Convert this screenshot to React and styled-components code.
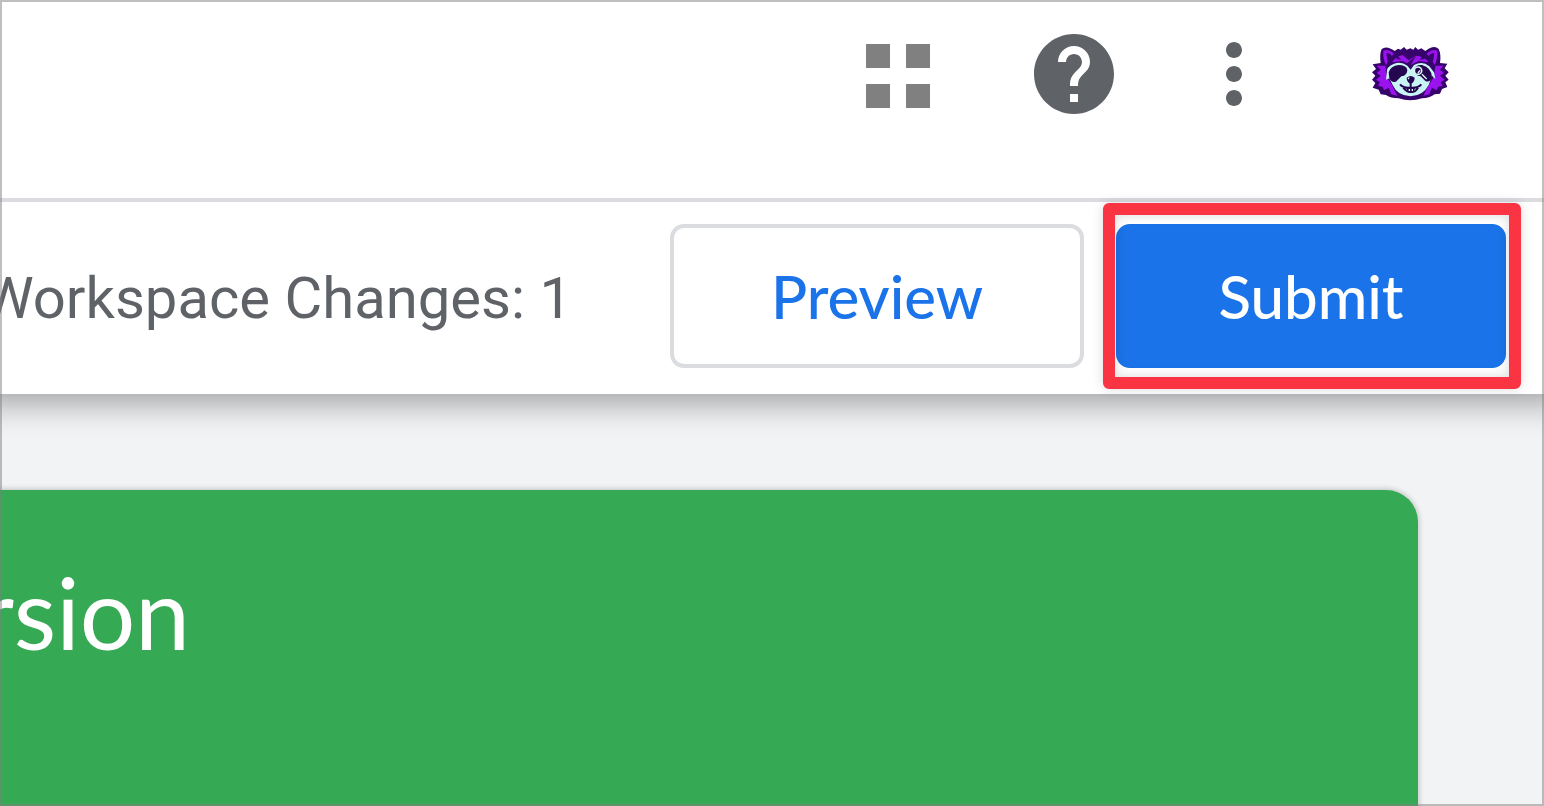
import React from "react";
import styled, { createGlobalStyle } from "styled-components";
import { MdHelp, MdMoreVert } from "react-icons/md";

const GlobalStyle = createGlobalStyle`
  * {
    box-sizing: border-box;
  }

  body {
    margin: 0;
    background-color: #F1F3F4;
    font-family: Lato, "Liberation Sans", sans-serif;
  }
`

const Page = styled.div`
  position: relative;
  display: flex;
  flex-direction: column;
  min-height: 100vh;
  overflow: hidden;
`

/* thin grey edge lying over the whole page */
const Frame = styled.div`
  position: absolute;
  inset: 0;
  border: 2px solid rgba(128, 128, 128, 0.5);
  pointer-events: none;
  z-index: 2;
`

const Top = styled.div`
  position: relative;
  background-color: #FFFFFF;
  box-shadow: 0 -14px 30px 24px rgba(0, 0, 0, 0.33);
`

const Header = styled.header`
  display: flex;
  justify-content: flex-end;
  gap: 80px;
  padding: 26px 86px 76px 0;
  border-bottom: 4px solid #DADCE0;
`

const IconGroup = styled.div`
  display: flex;
  gap: 64px;
`

const IconButton = styled.button`
  display: flex;
  align-items: center;
  justify-content: center;
  height: 96px;
  padding: 0;
  border: none;
  background: none;
  color: ${(props) => props.$color || '#5F6368'};
  cursor: pointer;
`

const Toolbar = styled.div`
  display: flex;
  align-items: center;
  justify-content: flex-end;
  padding: 22px 38px 26px 0;
`

const Changes = styled.div`
  margin-right: 98px;
  padding-top: 4px;
  font-family: Roboto, "Liberation Sans", sans-serif;
  font-size: 58px;
  line-height: 72px;
  white-space: nowrap;
  color: #5F6368;
`

const Buttons = styled.div`
  display: flex;
  gap: 32px;
`

const Button = styled.button`
  min-width: ${(props) => (props.$primary ? '390px' : '414px')};
  height: 144px;
  padding: 0 48px;
  border: 4px solid ${(props) => (props.$primary ? '#1A73E8' : '#DADCE0')};
  border-radius: 14px;
  background-color: ${(props) => (props.$primary ? '#1A73E8' : '#FFFFFF')};
  color: ${(props) => (props.$primary ? '#FFFFFF' : '#1A73E8')};
  font-family: inherit;
  font-size: 60px;
  font-weight: 500;
  line-height: 72px;
  cursor: pointer;
`

const Marked = styled.div`
  position: relative;
`

const Marker = styled.div`
  position: absolute;
  inset: -21px -15px -21px -13px;
  border: 12px solid #FA3442;
  border-radius: 6px;
  box-shadow: 0 0 12px rgba(0, 0, 0, 0.15), inset 0 0 12px rgba(0, 0, 0, 0.15);
  pointer-events: none;
`

const Main = styled.main`
  display: flex;
  flex: 1;
  padding: 96px 126px 0 0;
`

const Card = styled.section`
  flex: 1;
  padding-top: 64px;
  overflow: hidden;
  border-radius: 0 32px 0 0;
  background-color: #36A955;
  box-shadow: 0 0 4px 2px rgba(60, 64, 67, 0.2);
  color: #FFFFFF;
`

const CardTitle = styled.h2`
  display: flex;
  justify-content: flex-end;
  width: 190px;
  margin: 0;
  font-size: 98px;
  font-weight: 400;
  line-height: 116px;
`

const AppsIcon = () => (
  <svg width="96" height="96" viewBox="0 0 96 96" fill="currentColor">
    <rect x="16" y="18" width="24" height="24" />
    <rect x="56" y="18" width="24" height="24" />
    <rect x="16" y="58" width="24" height="24" />
    <rect x="56" y="58" width="24" height="24" />
  </svg>
)

const RaccoonIcon = () => (
  <svg width="96" height="96" viewBox="6 -27 288 288">
    <path
      fill="#36046B"
      d="M65 42Q80 30 104 48L114 41 122 44 132 36 140 44 151 40 160 44 166 36 174 44 184 40 196 48Q222 28 236 42Q244 58 240 84L262 86 254 100 266 112 256 122 266 134 256 142 262 156 246 162 240 176 224 178Q208 190 186 190Q150 202 116 190Q92 190 78 180L62 178 56 164 38 158 46 144 36 134 46 122 36 112 48 102 38 88 62 84Q58 58 65 42Z"
    />
    <path
      fill="#9A12EE"
      d="M70 47Q84 40 102 56L90 68 78 90Q68 70 70 47ZM232 47Q218 40 200 56L212 68 224 90Q234 70 232 47ZM76 92L50 92 62 104 50 114 62 122 48 134 60 142 54 152 68 156 72 166 86 158 94 178 112 182 96 150 84 132 78 112ZM226 92L250 92 240 104 252 114 240 122 254 134 242 142 248 152 234 156 230 166 216 158 208 178 190 182 206 150 218 132 224 112ZM96 82Q108 64 128 60L146 76 168 62Q190 62 206 82L176 78 152 90 128 78Z"
    />
    <path fill="#36046B" d="M79 54Q90 54 96 64L83 80ZM223 54Q212 54 206 64L219 80ZM132 92L168 62 150 94ZM112 62L124 74 110 72ZM190 62L178 74 194 72Z" />
    <path
      fill="#C9F5F5"
      d="M80 116Q78 94 102 86Q124 78 142 92L152 104 162 90Q188 76 208 94L222 112 226 132 216 122 206 150Q190 182 152 184Q112 182 98 150L88 130 78 134Z"
    />
    <path
      fill="#250750"
      d="M86 112Q92 92 116 90Q138 90 142 104Q142 122 124 124L108 140Q94 144 88 130ZM162 104Q166 88 186 90Q214 98 216 126Q210 144 196 138L182 124Q164 122 162 104Z"
    />
    <circle cx="174" cy="107" r="11" fill="none" stroke="#DCF8F8" strokeWidth="5" />
    <path fill="none" stroke="#DCF8F8" strokeWidth="4" d="M174 114L180 106M186 118L200 132" />
    <path fill="#250750" d="M140 128Q152 118 164 128Q164 142 152 146Q140 142 140 128Z" />
    <path
      fill="none"
      stroke="#250750"
      strokeWidth="6"
      d="M152 144V158M120 148Q130 160 152 158Q174 160 184 148M130 158Q140 172 152 171Q166 172 174 158"
    />
    <path fill="#250750" d="M138 158H166L160 172H144Z" />
    <path fill="#DCF8F8" d="M146 162H150V168H146ZM155 162H159V168H155ZM143 130L148 126 147 134Z" />
  </svg>
)

export const App = () => {
  return (
    <Page>
      <GlobalStyle />
      <Top>
        <Header>
          <IconButton $color="#808080" aria-label="Apps"><AppsIcon /></IconButton>
          <IconGroup>
            <IconButton aria-label="Help"><MdHelp size={96} /></IconButton>
            <IconButton aria-label="More"><MdMoreVert size={96} /></IconButton>
          </IconGroup>
          <IconButton aria-label="Account"><RaccoonIcon /></IconButton>
        </Header>
        <Toolbar>
          <Changes>Workspace Changes: 1</Changes>
          <Buttons>
            <Button>Preview</Button>
            <Marked>
              <Button $primary>Submit</Button>
              <Marker />
            </Marked>
          </Buttons>
        </Toolbar>
      </Top>
      <Main>
        <Card>
          <CardTitle>rsion</CardTitle>
        </Card>
      </Main>
      <Frame />
    </Page>
  )
}

export default App
